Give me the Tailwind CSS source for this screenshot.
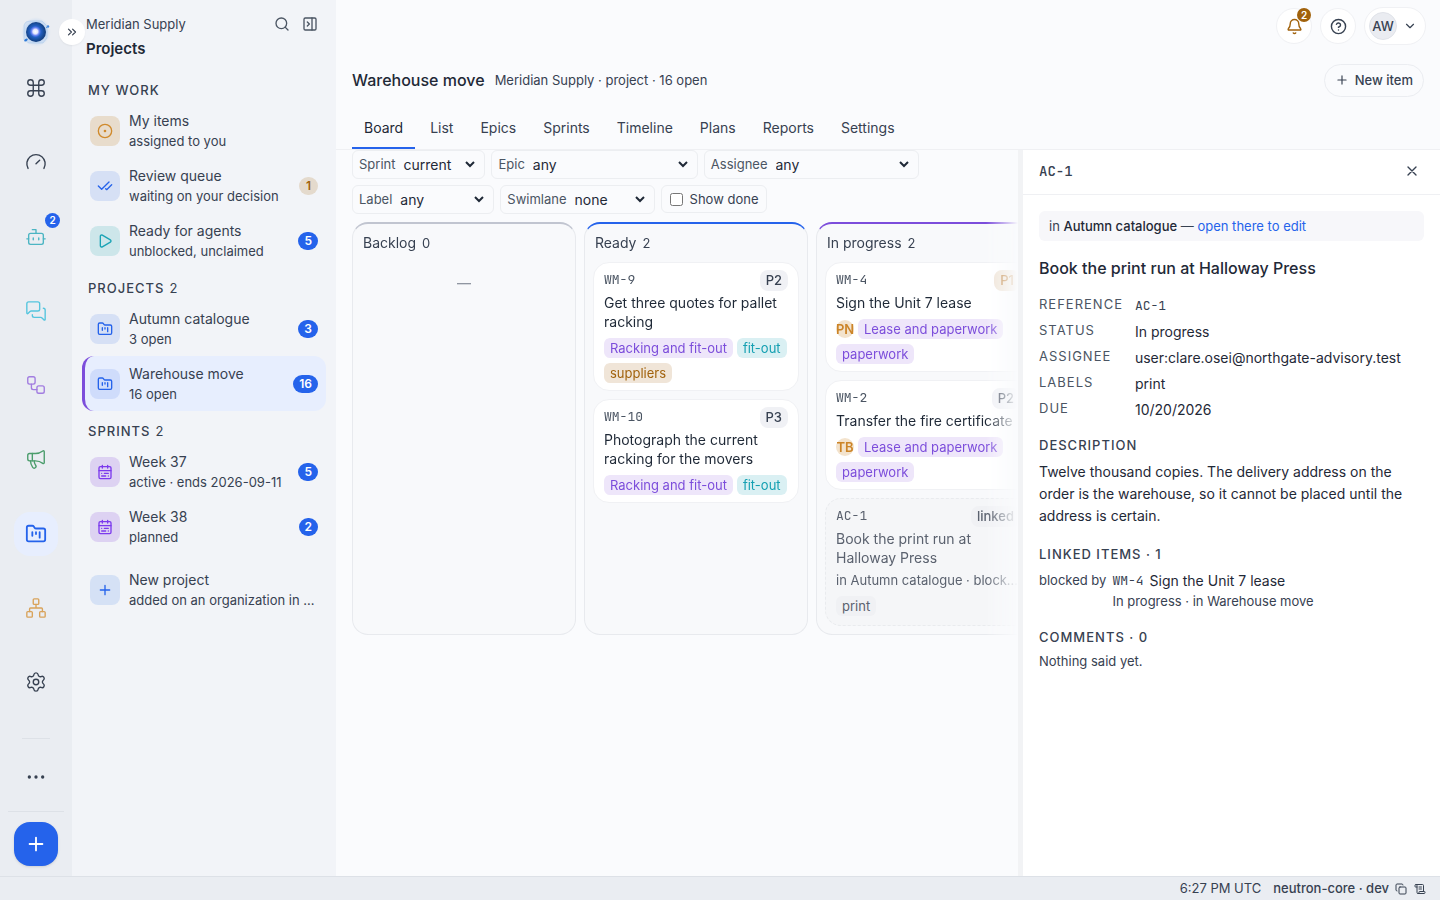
<!DOCTYPE html>
<html lang="en">
<head>
    <meta charset="UTF-8">
    <meta name="viewport" content="width=device-width, initial-scale=1.0">
    <title>Warehouse move - Projects</title>
    <script src="https://cdn.jsdelivr.net/npm/@tailwindcss/browser@4"></script>
</head>
<body class="flex h-screen flex-col overflow-hidden bg-[#fafbfd] font-['Inter',sans-serif] text-sm text-[#374151]">

    <!-- Shared icon shapes -->
    <svg class="hidden" aria-hidden="true">
        <symbol id="i-folder" viewBox="0 0 24 24"><path d="M4 20h16a2 2 0 0 0 2-2V8a2 2 0 0 0-2-2h-7.93a2 2 0 0 1-1.66-.9l-.82-1.2A2 2 0 0 0 7.93 3H4a2 2 0 0 0-2 2v13c0 1.1.9 2 2 2Z"/><path d="M8 10v4M12 10v2M16 10v6"/></symbol>
        <symbol id="i-calendar" viewBox="0 0 24 24"><rect x="3" y="4" width="18" height="18" rx="2"/><path d="M16 2v4M3 10h18M8 2v4M17 14h-6M13 18H7M7 14h.01M17 18h.01"/></symbol>
        <symbol id="i-plus" viewBox="0 0 24 24"><path d="M5 12h14M12 5v14"/></symbol>
    </svg>

    <div class="flex min-h-0 flex-1">

        <!-- Rail -->
        <nav aria-label="Main" class="flex w-[72px] shrink-0 flex-col items-center bg-[#eaedf2]">
            <a href="#" aria-label="Home" class="mt-4 mb-[18px] block size-8">
                <svg viewBox="0 0 32 32" class="size-8">
                    <defs>
                        <radialGradient id="orb" cx="47%" cy="48%" r="54%">
                            <stop offset="0" stop-color="#ffffff"/>
                            <stop offset=".22" stop-color="#e3e6ff"/>
                            <stop offset=".36" stop-color="#6f86f5"/>
                            <stop offset=".52" stop-color="#2360c4"/>
                            <stop offset=".8" stop-color="#174a94"/>
                            <stop offset="1" stop-color="#123a78"/>
                        </radialGradient>
                        <radialGradient id="halo">
                            <stop offset=".5" stop-color="#8db8ee" stop-opacity=".6"/>
                            <stop offset="1" stop-color="#b8d2f3" stop-opacity="0"/>
                        </radialGradient>
                    </defs>
                    <circle cx="16" cy="16" r="15" fill="url(#halo)"/>
                    <path d="M4 9q1-4 6-4h12l5 5v12l-4 5H9l-5-3z" fill="#b9d3f4" fill-opacity=".35" stroke="#8cb6e8" stroke-opacity=".5" stroke-width=".7"/>
                    <circle cx="16" cy="16" r="10" fill="url(#orb)"/>
                    <ellipse cx="6" cy="24" rx="1.900" ry="1.200" transform="rotate(-30 6 24)" fill="#2d7ad8"/>
                    <circle cx="28" cy="10.500" r="1.200" fill="#3f87dd"/>
                    <path d="M26 12l2-2" stroke="#4a8fe0" stroke-width=".8"/>
                </svg>
            </a>
            <div class="flex min-h-0 flex-1 flex-col items-center justify-between">
                <a href="#" aria-label="Command" class="flex size-11 items-center justify-center text-[#374151]">
                    <svg class="size-[22px]" viewBox="0 0 24 24" fill="none" stroke="currentColor" stroke-width="1.500" stroke-linecap="round" stroke-linejoin="round"><path d="M15 6v12a3 3 0 1 0 3-3H6a3 3 0 1 0 3 3V6a3 3 0 1 0-3 3h12a3 3 0 1 0-3-3"/></svg>
                </a>
                <a href="#" aria-label="Dashboard" class="flex size-11 items-center justify-center text-[#374151]">
                    <svg class="size-[22px]" viewBox="0 0 24 24" fill="none" stroke="currentColor" stroke-width="1.500" stroke-linecap="round" stroke-linejoin="round"><path d="m12 14 4-4M3.340 19a10 10 0 1 1 17.320 0"/></svg>
                </a>
                <a href="#" aria-label="Agents" class="relative flex size-11 items-center justify-center text-[#4cb5c3]">
                    <svg class="size-[22px]" viewBox="0 0 24 24" fill="none" stroke="currentColor" stroke-width="1.500" stroke-linecap="round" stroke-linejoin="round"><path d="M12 8V4H8"/><rect width="16" height="12" x="4" y="8" rx="2"/><path d="M2 14h2M20 14h2M15 13v2M9 13v2"/></svg>
                    <span class="absolute -top-[2px] -right-[2px] flex size-[15px] items-center justify-center rounded-full bg-[#2563eb] text-[10px] font-semibold text-white">2</span>
                </a>
                <a href="#" aria-label="Messages" class="flex size-11 items-center justify-center text-[#56c5de]">
                    <svg class="size-[22px]" viewBox="0 0 24 24" fill="none" stroke="currentColor" stroke-width="1.500" stroke-linecap="round" stroke-linejoin="round"><path d="M16 10a2 2 0 0 1-2 2H6.828a2 2 0 0 0-1.414.586l-2.202 2.202A.71.71 0 0 1 2 14.286V4a2 2 0 0 1 2-2h10a2 2 0 0 1 2 2z"/><path d="M20 9a2 2 0 0 1 2 2v10.286a.71.71 0 0 1-1.212.502l-2.202-2.202A2 2 0 0 0 17.172 19H10a2 2 0 0 1-2-2v-1"/></svg>
                </a>
                <a href="#" aria-label="Workflows" class="flex size-11 items-center justify-center text-[#a27de0]">
                    <svg class="size-[22px]" viewBox="0 0 24 24" fill="none" stroke="currentColor" stroke-width="1.500" stroke-linecap="round" stroke-linejoin="round"><rect width="8" height="8" x="3" y="3" rx="2"/><path d="M7 11v4a2 2 0 0 0 2 2h4"/><rect width="8" height="8" x="13" y="13" rx="2"/></svg>
                </a>
                <a href="#" aria-label="Campaigns" class="flex size-11 items-center justify-center text-[#4b9d6c]">
                    <svg class="size-[22px]" viewBox="0 0 24 24" fill="none" stroke="currentColor" stroke-width="1.500" stroke-linecap="round" stroke-linejoin="round"><path d="M11 6a13 13 0 0 0 8.400-2.800A1 1 0 0 1 21 4v12a1 1 0 0 1-1.600.800A13 13 0 0 0 11 14H5a2 2 0 0 1-2-2V8a2 2 0 0 1 2-2z"/><path d="M6 14a12 12 0 0 0 2.400 7.200 2 2 0 0 0 3.200-2.400A8 8 0 0 1 10 14M8 6v8"/></svg>
                </a>
                <a href="#" aria-label="Projects" aria-current="page" class="flex size-11 items-center justify-center rounded-2xl bg-[#e7eefe] text-[#2563eb]">
                    <svg class="size-[22px]" fill="none" stroke="currentColor" stroke-width="2" stroke-linecap="round" stroke-linejoin="round"><use href="#i-folder"/></svg>
                </a>
                <a href="#" aria-label="Organization" class="flex size-11 items-center justify-center text-[#d9a35b]">
                    <svg class="size-[22px]" viewBox="0 0 24 24" fill="none" stroke="currentColor" stroke-width="1.500" stroke-linecap="round" stroke-linejoin="round"><rect x="16" y="16" width="6" height="6" rx="1"/><rect x="2" y="16" width="6" height="6" rx="1"/><rect x="9" y="2" width="6" height="6" rx="1"/><path d="M5 16v-3a1 1 0 0 1 1-1h12a1 1 0 0 1 1 1v3M12 12V8"/></svg>
                </a>
                <a href="#" aria-label="Settings" class="flex size-11 items-center justify-center text-[#374151]">
                    <svg class="size-[22px]" viewBox="0 0 24 24" fill="none" stroke="currentColor" stroke-width="1.500" stroke-linecap="round" stroke-linejoin="round"><path d="M9.671 4.136a2.340 2.340 0 0 1 4.659 0 2.340 2.340 0 0 0 3.319 1.915 2.340 2.340 0 0 1 2.330 4.033 2.340 2.340 0 0 0 0 3.831 2.340 2.340 0 0 1-2.330 4.033 2.340 2.340 0 0 0-3.319 1.915 2.340 2.340 0 0 1-4.659 0 2.340 2.340 0 0 0-3.320-1.915 2.340 2.340 0 0 1-2.330-4.033 2.340 2.340 0 0 0 0-3.831A2.340 2.340 0 0 1 6.350 6.051a2.340 2.340 0 0 0 3.319-1.915"/><circle cx="12" cy="12" r="3"/></svg>
                </a>
            </div>
            <div class="mt-[34px] h-px w-7 bg-[#dde1e7]"></div>
            <button aria-label="More" class="mt-4 flex size-11 items-center justify-center text-[#374151]">
                <svg class="size-[20px]" viewBox="0 0 24 24" fill="currentColor"><circle cx="4" cy="12" r="2"/><circle cx="12" cy="12" r="2"/><circle cx="20" cy="12" r="2"/></svg>
            </button>
            <div class="mt-3 h-px w-14 bg-[#dde1e7]"></div>
            <button aria-label="Create" class="my-[10px] flex size-11 items-center justify-center rounded-2xl bg-[#2563eb] text-white shadow-sm">
                <svg class="size-[22px]" fill="none" stroke="currentColor" stroke-width="2" stroke-linecap="round"><use href="#i-plus"/></svg>
            </button>
        </nav>

        <!-- Sidebar -->
        <aside class="relative flex w-[264px] shrink-0 flex-col bg-[#f2f4f8] px-[10px]">
            <button aria-label="Expand" class="absolute top-[19px] -left-[13px] flex size-[26px] items-center justify-center rounded-full bg-white text-[#374151] shadow-xs">
                <svg class="size-[14px]" viewBox="0 0 24 24" fill="none" stroke="currentColor" stroke-width="2" stroke-linecap="round" stroke-linejoin="round"><path d="m6 17 5-5-5-5M13 17l5-5-5-5"/></svg>
            </button>
            <header class="flex items-start justify-between pt-[14px] pr-2 pb-[6px] pl-1">
                <div>
                    <p class="text-[13px] leading-5">Meridian Supply</p>
                    <h2 class="text-[15px] leading-[30px] font-semibold text-[#1f2937]">Projects</h2>
                </div>
                <div class="flex h-5 items-center gap-3 text-[#4b5563]">
                    <button aria-label="Search"><svg class="size-4" viewBox="0 0 24 24" fill="none" stroke="currentColor" stroke-width="2" stroke-linecap="round" stroke-linejoin="round"><path d="m21 21-4.340-4.340"/><circle cx="11" cy="11" r="8"/></svg></button>
                    <button aria-label="Close panel"><svg class="size-4" viewBox="0 0 24 24" fill="none" stroke="currentColor" stroke-width="2" stroke-linecap="round" stroke-linejoin="round"><rect width="18" height="18" x="3" y="3" rx="2"/><path d="M15 3v18M8 9l3 3-3 3"/></svg></button>
                </div>
            </header>

            <h3 class="px-[6px] pt-[10px] pb-[3px] text-[13px] leading-5 font-medium tracking-[1px]">MY WORK</h3>
            <a href="#" class="flex h-[55px] items-center gap-[9px] px-2">
                <span class="flex size-[30px] shrink-0 items-center justify-center rounded-lg bg-[#e8dccc] text-[#d08a2c]">
                    <svg class="size-4" viewBox="0 0 24 24" fill="none" stroke="currentColor" stroke-width="2" stroke-linecap="round"><circle cx="12" cy="12" r="10"/><circle cx="12" cy="12" r="1"/></svg>
                </span>
                <span class="min-w-0 flex-1"><span class="block text-sm leading-5">My items</span><span class="block truncate text-[13px] leading-5">assigned to you</span></span>
            </a>
            <a href="#" class="flex h-[55px] items-center gap-[9px] px-2">
                <span class="flex size-[30px] shrink-0 items-center justify-center rounded-lg bg-[#d6e0f5] text-[#2563eb]">
                    <svg class="size-4" viewBox="0 0 24 24" fill="none" stroke="currentColor" stroke-width="2" stroke-linecap="round" stroke-linejoin="round"><path d="M18 6 7 17l-5-5M22 10l-7.500 7.500L13 16"/></svg>
                </span>
                <span class="min-w-0 flex-1"><span class="block text-sm leading-5">Review queue</span><span class="block truncate text-[13px] leading-5">waiting on your decision</span></span>
                <span class="flex h-[18px] min-w-[19px] items-center justify-center rounded-full bg-[#e4dacd] px-[6px] text-xs font-semibold text-[#a1620c]">1</span>
            </a>
            <a href="#" class="flex h-[55px] items-center gap-[9px] px-2">
                <span class="flex size-[30px] shrink-0 items-center justify-center rounded-lg bg-[#cde6ea] text-[#1aa3b5]">
                    <svg class="size-4" viewBox="0 0 24 24" fill="none" stroke="currentColor" stroke-width="2" stroke-linecap="round" stroke-linejoin="round"><path d="M5 5a2 2 0 0 1 3.008-1.728l11.997 6.998a2 2 0 0 1 .003 3.458l-12 7A2 2 0 0 1 5 19z"/></svg>
                </span>
                <span class="min-w-0 flex-1"><span class="block text-sm leading-5">Ready for agents</span><span class="block truncate text-[13px] leading-5">unblocked, unclaimed</span></span>
                <span class="flex h-[18px] min-w-[19px] items-center justify-center rounded-full bg-[#2563eb] px-[6px] text-xs font-semibold text-white">5</span>
            </a>

            <h3 class="flex gap-[5px] px-[6px] pt-[10px] pb-[3px] text-[13px] leading-5 font-medium tracking-[1px]">PROJECTS <span class="font-normal">2</span></h3>
            <a href="#" class="flex h-[55px] items-center gap-[9px] px-2">
                <span class="flex size-[30px] shrink-0 items-center justify-center rounded-lg bg-[#d6e0f5] text-[#2563eb]">
                    <svg class="size-4" fill="none" stroke="currentColor" stroke-width="2" stroke-linecap="round" stroke-linejoin="round"><use href="#i-folder"/></svg>
                </span>
                <span class="min-w-0 flex-1"><span class="block text-sm leading-5">Autumn catalogue</span><span class="block truncate text-[13px] leading-5">3 open</span></span>
                <span class="flex h-[18px] min-w-[19px] items-center justify-center rounded-full bg-[#2563eb] px-[6px] text-xs font-semibold text-white">3</span>
            </a>
            <a href="#" aria-current="page" class="flex h-[55px] items-center gap-[9px] rounded-xl border-l-3 border-[#7c4ddb] bg-[#e7eefe] pr-2 pl-[5px]">
                <span class="flex size-[30px] shrink-0 items-center justify-center rounded-lg bg-[#cfdcfb] text-[#2563eb]">
                    <svg class="size-4" fill="none" stroke="currentColor" stroke-width="2" stroke-linecap="round" stroke-linejoin="round"><use href="#i-folder"/></svg>
                </span>
                <span class="min-w-0 flex-1"><span class="block text-sm leading-5">Warehouse move</span><span class="block truncate text-[13px] leading-5">16 open</span></span>
                <span class="flex h-[18px] min-w-[19px] items-center justify-center rounded-full bg-[#2563eb] px-[6px] text-xs font-semibold text-white">16</span>
            </a>

            <h3 class="flex gap-[5px] px-[6px] pt-[10px] pb-[3px] text-[13px] leading-5 font-medium tracking-[1px]">SPRINTS <span class="font-normal">2</span></h3>
            <a href="#" class="flex h-[55px] items-center gap-[9px] px-2">
                <span class="flex size-[30px] shrink-0 items-center justify-center rounded-lg bg-[#ddd2f2] text-[#7c3aed]">
                    <svg class="size-4" fill="none" stroke="currentColor" stroke-width="2" stroke-linecap="round" stroke-linejoin="round"><use href="#i-calendar"/></svg>
                </span>
                <span class="min-w-0 flex-1"><span class="block text-sm leading-5">Week 37</span><span class="block truncate text-[13px] leading-5">active · ends 2026-09-11</span></span>
                <span class="flex h-[18px] min-w-[19px] items-center justify-center rounded-full bg-[#2563eb] px-[6px] text-xs font-semibold text-white">5</span>
            </a>
            <a href="#" class="flex h-[55px] items-center gap-[9px] px-2">
                <span class="flex size-[30px] shrink-0 items-center justify-center rounded-lg bg-[#ddd2f2] text-[#7c3aed]">
                    <svg class="size-4" fill="none" stroke="currentColor" stroke-width="2" stroke-linecap="round" stroke-linejoin="round"><use href="#i-calendar"/></svg>
                </span>
                <span class="min-w-0 flex-1"><span class="block text-sm leading-5">Week 38</span><span class="block truncate text-[13px] leading-5">planned</span></span>
                <span class="flex h-[18px] min-w-[19px] items-center justify-center rounded-full bg-[#2563eb] px-[6px] text-xs font-semibold text-white">2</span>
            </a>
            <a href="#" class="mt-2 flex h-[55px] items-center gap-[9px] px-2">
                <span class="flex size-[30px] shrink-0 items-center justify-center rounded-lg bg-[#d5e1f5] text-[#2563eb]">
                    <svg class="size-4" fill="none" stroke="currentColor" stroke-width="2" stroke-linecap="round"><use href="#i-plus"/></svg>
                </span>
                <span class="min-w-0 flex-1"><span class="block text-sm leading-5">New project</span><span class="block truncate text-[13px] leading-5">added on an organization in the directory</span></span>
            </a>
        </aside>

        <!-- Main -->
        <main class="flex min-w-0 flex-1 flex-col">
            <div class="flex h-[52px] items-center justify-end gap-2 pr-[14px]">
                <button aria-label="Notifications" class="relative flex size-9 items-center justify-center rounded-full border border-[#f0f1f4] bg-white text-[#a1620c]">
                    <svg class="size-[17px]" viewBox="0 0 24 24" fill="none" stroke="currentColor" stroke-width="2" stroke-linecap="round" stroke-linejoin="round"><path d="M10.268 21a2 2 0 0 0 3.464 0M3.262 15.326A1 1 0 0 0 4 17h16a1 1 0 0 0 .740-1.673C19.410 13.956 18 12.499 18 8A6 6 0 0 0 6 8c0 4.499-1.411 5.956-2.738 7.326"/></svg>
                    <span class="absolute -top-px right-0 flex size-[14px] items-center justify-center rounded-full bg-[#a1620c] text-[10px] font-semibold text-white">2</span>
                </button>
                <button aria-label="Help" class="flex size-9 items-center justify-center rounded-full border border-[#f0f1f4] bg-white text-[#374151]">
                    <svg class="size-[17px]" viewBox="0 0 24 24" fill="none" stroke="currentColor" stroke-width="2" stroke-linecap="round" stroke-linejoin="round"><circle cx="12" cy="12" r="10"/><path d="M9.090 9a3 3 0 0 1 5.830 1c0 2-3 3-3 3M12 17h.01"/></svg>
                </button>
                <button aria-label="Account" class="flex h-[38px] items-center gap-[6px] rounded-full border border-[#f0f1f4] bg-white pr-2 pl-1">
                    <span class="flex size-7 items-center justify-center rounded-full border border-[#e0e3e9] bg-[#eaecf1] text-[13px] font-medium">AW</span>
                    <svg class="size-[14px]" viewBox="0 0 24 24" fill="none" stroke="currentColor" stroke-width="2" stroke-linecap="round" stroke-linejoin="round"><path d="m6 9 6 6 6-6"/></svg>
                </button>
            </div>

            <div class="flex h-14 items-center gap-[10px] px-4">
                <h1 class="text-base font-medium text-[#1f2937]">Warehouse move</h1>
                <p class="flex-1 text-[13px]">Meridian Supply · project · 16 open</p>
                <button class="flex h-[33px] items-center gap-[6px] rounded-full border border-[#ebedf1] px-[10px] text-[13px] font-medium">
                    <svg class="size-[14px]" fill="none" stroke="currentColor" stroke-width="2" stroke-linecap="round"><use href="#i-plus"/></svg>
                    New item
                </button>
            </div>

            <div class="flex h-[42px] items-stretch gap-[3px] border-b border-[#eff0f3] px-4 text-sm leading-5">
                <a href="#" class="flex items-center border-b-2 border-[#2563eb] px-3 text-[#1f2937]">Board</a>
                <a href="#" class="flex items-center border-b-2 border-transparent px-3">List</a>
                <a href="#" class="flex items-center border-b-2 border-transparent px-3">Epics</a>
                <a href="#" class="flex items-center border-b-2 border-transparent px-3">Sprints</a>
                <a href="#" class="flex items-center border-b-2 border-transparent px-3">Timeline</a>
                <a href="#" class="flex items-center border-b-2 border-transparent px-3">Plans</a>
                <a href="#" class="flex items-center border-b-2 border-transparent px-3">Reports</a>
                <a href="#" class="flex items-center border-b-2 border-transparent px-3">Settings</a>
            </div>

            <div class="flex min-h-0 flex-1">
                <section class="min-w-0 flex-1 pl-4">
                    <form class="flex flex-wrap gap-[6px] text-[13px] text-[#4b5563]">
                        <label class="flex h-[29px] items-center gap-1 rounded-md border border-[#eceef1] px-[6px]">Sprint
                            <select class="w-[79px] text-sm text-[#1f2937]"><option>current</option></select>
                        </label>
                        <label class="flex h-[29px] items-center gap-1 rounded-md border border-[#eceef1] px-[6px]">Epic
                            <select class="w-[162px] text-sm text-[#1f2937]"><option>any</option></select>
                        </label>
                        <label class="flex h-[29px] items-center gap-1 rounded-md border border-[#eceef1] px-[6px]">Assignee
                            <select class="w-[140px] text-sm text-[#1f2937]"><option>any</option></select>
                        </label>
                        <label class="flex h-[29px] items-center gap-1 rounded-md border border-[#eceef1] px-[6px]">Label
                            <select class="w-[91px] text-sm text-[#1f2937]"><option>any</option></select>
                        </label>
                        <label class="flex h-[29px] items-center gap-1 rounded-md border border-[#eceef1] px-[6px]">Swimlane
                            <select class="w-[77px] text-sm text-[#1f2937]"><option>none</option></select>
                        </label>
                        <label class="flex h-7 items-center gap-[7px] rounded-md border border-[#eceef1] px-2 text-[#374151]">
                            <input type="checkbox" class="size-[13px]">Show done
                        </label>
                    </form>

                    <div class="mt-2 flex gap-2 overflow-hidden mask-r-from-[calc(100%-32px)] mask-r-to-100%">
                        <div class="w-56 shrink-0 rounded-2xl border border-t-2 border-[#e8eaee] border-t-[#c1c5d0] bg-[#f8f9fb] px-2 pb-2">
                            <h2 class="flex h-[38px] items-center gap-[6px] px-[2px]">Backlog <span class="text-[13px]">0</span></h2>
                            <p class="pt-[11px] text-center font-medium text-[#9096a1]">—</p>
                        </div>

                        <div class="w-56 shrink-0 rounded-2xl border border-t-2 border-[#e8eaee] border-t-[#2563eb] bg-[#f8f9fb] px-2 pb-2">
                            <h2 class="flex h-[38px] items-center gap-[6px] px-[2px]">Ready <span class="text-[13px]">2</span></h2>
                            <div class="flex flex-col gap-2">
                                <article class="rounded-2xl border border-[#f0f1f4] bg-white px-[10px] py-[7px]">
                                    <div class="flex items-center justify-between">
                                        <span class="font-['JetBrains_Mono','Liberation_Mono',monospace] text-[13px] text-[#4b5563]">WM-9</span>
                                        <span class="flex h-[21px] items-center rounded-lg bg-[#f0f1f5] px-[6px] text-[13px] font-medium">P2</span>
                                    </div>
                                    <h3 class="mt-[2px] text-sm leading-[19px] text-[#1f2937]">Get three quotes for pallet racking</h3>
                                    <div class="mt-[7px] flex flex-wrap gap-x-1 gap-y-[5px] text-[13px] leading-5">
                                        <span class="rounded-md bg-[#eee6fa] px-[6px] text-[#7c4ddb]">Racking and fit-out</span>
                                        <span class="rounded-md bg-[#daf0f3] px-[6px] text-[#15a0b2]">fit-out</span>
                                        <span class="rounded-md bg-[#f0e5d8] px-[6px] text-[#a1620c]">suppliers</span>
                                    </div>
                                </article>
                                <article class="rounded-2xl border border-[#f0f1f4] bg-white px-[10px] py-[7px]">
                                    <div class="flex items-center justify-between">
                                        <span class="font-['JetBrains_Mono','Liberation_Mono',monospace] text-[13px] text-[#4b5563]">WM-10</span>
                                        <span class="flex h-[21px] items-center rounded-lg bg-[#f0f1f5] px-[6px] text-[13px] font-medium">P3</span>
                                    </div>
                                    <h3 class="mt-[2px] text-sm leading-[19px] text-[#1f2937]">Photograph the current racking for the movers</h3>
                                    <div class="mt-[7px] flex flex-wrap gap-x-1 gap-y-[5px] text-[13px] leading-5">
                                        <span class="rounded-md bg-[#eee6fa] px-[6px] text-[#7c4ddb]">Racking and fit-out</span>
                                        <span class="rounded-md bg-[#daf0f3] px-[6px] text-[#15a0b2]">fit-out</span>
                                    </div>
                                </article>
                            </div>
                        </div>

                        <div class="w-56 shrink-0 rounded-2xl border border-t-2 border-[#e8eaee] border-t-[#7c4ddb] bg-[#f8f9fb] px-2 pb-2">
                            <h2 class="flex h-[38px] items-center gap-[6px] px-[2px]">In progress <span class="text-[13px]">2</span></h2>
                            <div class="flex flex-col gap-2">
                                <article class="rounded-2xl border border-[#f0f1f4] bg-white px-[10px] py-[7px]">
                                    <div class="flex items-center justify-between">
                                        <span class="font-['JetBrains_Mono','Liberation_Mono',monospace] text-[13px] text-[#4b5563]">WM-4</span>
                                        <span class="flex h-[21px] items-center rounded-lg bg-[#efe3d4] px-[6px] text-[13px] font-medium text-[#b9772a]">P1</span>
                                    </div>
                                    <h3 class="mt-[2px] text-sm leading-[19px] text-[#1f2937]">Sign the Unit 7 lease</h3>
                                    <div class="mt-[7px] flex flex-wrap gap-x-1 gap-y-[5px] text-[13px] leading-5">
                                        <span class="flex h-5 w-[18px] items-center justify-center"><span class="flex size-[18px] shrink-0 items-center justify-center rounded-full bg-[#f3e3cd] font-semibold text-[#cc8427]">PN</span></span>
                                        <span class="rounded-md bg-[#eee6fa] px-[6px] text-[#7c4ddb]">Lease and paperwork</span>
                                        <span class="rounded-md bg-[#eee6fa] px-[6px] text-[#7c4ddb]">paperwork</span>
                                    </div>
                                </article>
                                <article class="rounded-2xl border border-[#f0f1f4] bg-white px-[10px] py-[7px]">
                                    <div class="flex items-center justify-between">
                                        <span class="font-['JetBrains_Mono','Liberation_Mono',monospace] text-[13px] text-[#4b5563]">WM-2</span>
                                        <span class="flex h-[21px] items-center rounded-lg bg-[#f0f1f5] px-[6px] text-[13px] font-medium">P2</span>
                                    </div>
                                    <h3 class="mt-[2px] text-sm leading-[19px] text-[#1f2937]">Transfer the fire certificate</h3>
                                    <div class="mt-[7px] flex flex-wrap gap-x-1 gap-y-[5px] text-[13px] leading-5">
                                        <span class="flex h-5 w-[18px] items-center justify-center"><span class="flex size-[18px] shrink-0 items-center justify-center rounded-full bg-[#f3e3cd] font-semibold text-[#cc8427]">TB</span></span>
                                        <span class="rounded-md bg-[#eee6fa] px-[6px] text-[#7c4ddb]">Lease and paperwork</span>
                                        <span class="rounded-md bg-[#eee6fa] px-[6px] text-[#7c4ddb]">paperwork</span>
                                    </div>
                                </article>
                                <article class="rounded-2xl border border-dashed border-[#e9ebee] bg-[#f5f6f8] px-[10px] pt-[7px] pb-[9px] text-[#5b626f]">
                                    <div class="flex items-center justify-between">
                                        <span class="font-['JetBrains_Mono','Liberation_Mono',monospace] text-[13px]">AC-1</span>
                                        <span class="flex h-[21px] items-center rounded-lg bg-[#f0f1f4] px-[6px] text-[13px] font-medium">linked</span>
                                    </div>
                                    <h3 class="mt-[2px] text-sm leading-[19px]">Book the print run at Halloway Press</h3>
                                    <p class="mt-[3px] truncate text-[13px] leading-5">in Autumn catalogue · blocked by WM-4</p>
                                    <div class="mt-[6px] flex text-[13px] leading-5">
                                        <span class="rounded-md bg-[#f0f1f4] px-[6px]">print</span>
                                    </div>
                                </article>
                            </div>
                        </div>
                    </div>
                </section>

                <!-- Item details -->
                <aside class="flex w-[422px] shrink-0 flex-col border-l-5 border-[#f2f3f5] bg-white">
                    <header class="flex h-[45px] items-center justify-between border-b border-[#eff0f3] px-4 pb-[2px]">
                        <span class="font-['JetBrains_Mono','Liberation_Mono',monospace] text-sm font-medium">AC-1</span>
                        <button aria-label="Close" class="p-1"><svg class="size-4" viewBox="0 0 24 24" fill="none" stroke="currentColor" stroke-width="2" stroke-linecap="round"><path d="M18 6 6 18M6 6l12 12"/></svg></button>
                    </header>
                    <div class="flex flex-col p-4">
                        <p class="rounded-md bg-[#f7f7fa] px-[10px] py-[5px] text-[13px] leading-5">in <span class="font-medium text-[#1f2937]">Autumn catalogue</span> — <a href="#" class="text-[#2563eb]">open there to edit</a></p>
                        <h2 class="mt-4 text-base leading-[22px] font-medium text-[#1f2937]">Book the print run at Halloway Press</h2>
                        <dl class="mt-[15px] grid grid-cols-[auto_1fr] gap-x-3 gap-y-[2px] leading-6">
                            <dt class="text-[13px] leading-5 tracking-[1px] text-[#4b5563]">REFERENCE</dt>
                            <dd class="font-['JetBrains_Mono','Liberation_Mono',monospace] text-[13px]">AC-1</dd>
                            <dt class="text-[13px] leading-5 tracking-[1px] text-[#4b5563]">STATUS</dt>
                            <dd class="text-[#1f2937]">In progress</dd>
                            <dt class="text-[13px] leading-5 tracking-[1px] text-[#4b5563]">ASSIGNEE</dt>
                            <dd class="text-[#1f2937]">user:clare.osei@northgate-advisory.test</dd>
                            <dt class="text-[13px] leading-5 tracking-[1px] text-[#4b5563]">LABELS</dt>
                            <dd class="text-[#1f2937]">print</dd>
                            <dt class="text-[13px] leading-5 tracking-[1px] text-[#4b5563]">DUE</dt>
                            <dd class="text-[#1f2937]">10/20/2026</dd>
                        </dl>
                        <h3 class="mt-[13px] text-[13px] leading-5 font-medium tracking-[1px]">DESCRIPTION</h3>
                        <p class="mt-[6px] leading-[22px] text-[#1f2937]">Twelve thousand copies. The delivery address on the order is the warehouse, so it cannot be placed until the address is certain.</p>
                        <h3 class="mt-[17px] text-[13px] leading-5 font-medium tracking-[1px]">LINKED ITEMS · 1</h3>
                        <div class="mt-[6px] flex gap-[6px] text-[13px] leading-[21px]">
                            <span>blocked by</span>
                            <div>
                                <p class="flex gap-[6px]"><span class="font-['JetBrains_Mono','Liberation_Mono',monospace]">WM-4</span> <a href="#" class="text-sm leading-[21px] text-[#1f2937]">Sign the Unit 7 lease</a></p>
                                <p class="leading-5">In progress · in Warehouse move</p>
                            </div>
                        </div>
                        <h3 class="mt-4 text-[13px] leading-5 font-medium tracking-[1px]">COMMENTS · 0</h3>
                        <p class="mt-1 text-[13px] leading-5">Nothing said yet.</p>
                    </div>
                </aside>
            </div>
        </main>
    </div>

    <!-- Status bar -->
    <footer class="flex h-6 shrink-0 items-center justify-end border-t border-[#dde1e7] bg-[#eaedf2] pr-[14px] text-[13px]">
        <span class="mr-3">6:27 PM UTC</span>
        <span class="mr-[6px] font-medium">neutron-core · dev</span>
        <button aria-label="Copy version" class="mr-[7px]"><svg class="size-3" viewBox="0 0 24 24" fill="none" stroke="currentColor" stroke-width="2" stroke-linecap="round" stroke-linejoin="round"><rect width="14" height="14" x="8" y="8" rx="2"/><path d="M4 16c-1.100 0-2-.900-2-2V4c0-1.100.900-2 2-2h10c1.100 0 2 .900 2 2"/></svg></button>
        <button aria-label="Logs"><svg class="size-3" viewBox="0 0 24 24" fill="none" stroke="currentColor" stroke-width="2" stroke-linecap="round" stroke-linejoin="round"><path d="M15 12h-5M15 8h-5M19 17V5a2 2 0 0 0-2-2H4M8 21h12a2 2 0 0 0 2-2v-1a1 1 0 0 0-1-1H11a1 1 0 0 0-1 1v1a2 2 0 1 1-4 0V5a2 2 0 1 0-4 0v2a1 1 0 0 0 1 1h3"/></svg></button>
    </footer>

</body>
</html>
